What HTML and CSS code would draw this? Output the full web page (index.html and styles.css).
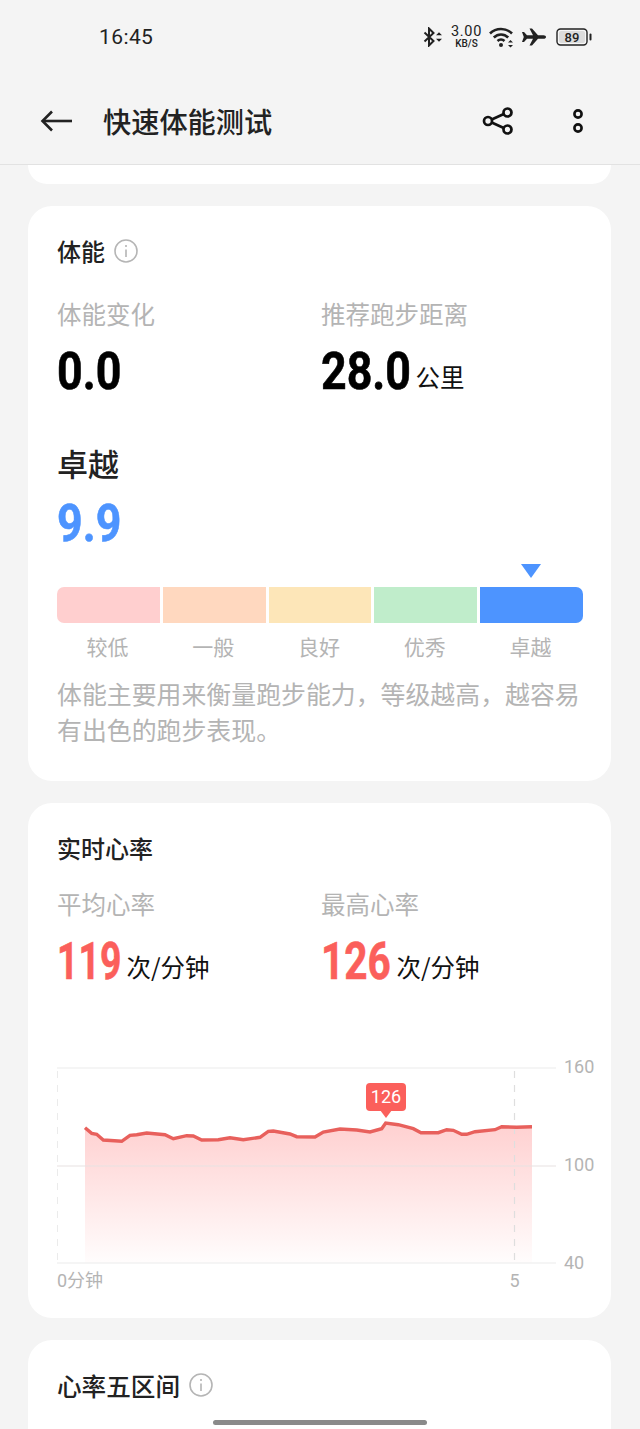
FILE: index.html
```html
<!DOCTYPE html>
<html lang="zh-CN">
<head>
  <meta charset="UTF-8" />
  <meta name="viewport" content="width=device-width, initial-scale=1.0"/>
  <title>快速体能测试</title>
  <link rel="stylesheet" href="styles.css">
</head>
<body>

  <!-- Status bar -->
  <div class="status-bar">
    <span class="time">16:45</span>
    <div class="status-icons">
      <svg class="icon-bt" viewBox="0 0 20 20" width="20" height="20" fill="none" stroke="#222" stroke-width="2">
        <path d="M1.5 5.5 L10.5 14 L6 18.5 V1.5 L10.5 6 L1.5 14.5"/>
        <path d="M13 8.3 L16 5.3 L19 8.3 Z M13 11.7 L16 14.7 L19 11.7 Z" fill="#222" stroke="none"/>
      </svg>
      <div class="speed">
        <span class="speed-num">3.00</span>
        <span class="speed-unit">KB/S</span>
      </div>
      <svg class="icon-wifi" viewBox="0 0 26 22" width="26" height="22" fill="none" stroke="#222" stroke-width="2.6">
        <path d="M1 7.5 C7 1.5 17 1.5 23 7.5"/>
        <path d="M4.8 11.5 C9 7.5 15 7.5 19.2 11.5"/>
        <path d="M8.5 15 C10.5 13.2 13.5 13.2 15.5 15"/>
        <circle cx="12" cy="19" r="2" fill="#222" stroke="none"/>
        <path d="M19 16.5 L21.5 14 L24 16.5 Z M19 19 L21.5 21.5 L24 19 Z" fill="#222" stroke="none"/>
      </svg>
      <svg class="icon-plane" viewBox="0 0 24 18" width="24" height="18" fill="#222">
        <path d="M0 4 H2 L5 7.2 H11 L7.5 0.5 H10 L16 7.2 H21.5 C23 7.2 24 8 24 9 C24 10 23 10.8 21.5 10.8 H16 L10 17.5 H7.5 L11 10.8 H5 L2 14 H0 L1.8 9 Z"/>
      </svg>
      <svg class="icon-battery" viewBox="0 0 37 18" width="37" height="18">
        <rect x="1" y="1" width="30" height="16" rx="3.5" fill="#fff" fill-opacity=".2" stroke="#222" stroke-width="1.4"/>
        <rect x="3" y="3" width="26" height="12" rx="2" fill="#dcdcdc"/>
        <rect x="33.5" y="5.5" width="2" height="7" rx="1" fill="#222"/>
        <text x="16" y="14" text-anchor="middle" class="battery-text">89</text>
      </svg>
    </div>
  </div>

  <!-- App bar -->
  <div class="app-bar">
    <svg class="back" viewBox="0 0 34 24" width="34" height="24" fill="none" stroke="#222" stroke-width="2.6">
      <path d="M32 12 H3"/>
      <path d="M12 2.5 L2.5 12 L12 21.5"/>
    </svg>
    <h1 class="page-title">快速体能测试</h1>
    <svg class="share" viewBox="0 0 32 30" width="32" height="30" fill="none" stroke="#111" stroke-width="2.7">
      <circle cx="6" cy="15" r="4"/>
      <circle cx="25.5" cy="6.5" r="4"/>
      <circle cx="25.5" cy="23.5" r="4"/>
      <path d="M9.7 13.4 L21.8 8.1 M9.7 16.6 L21.8 21.9"/>
    </svg>
    <svg class="more" viewBox="0 0 12 26" width="12" height="26" fill="none" stroke="#111" stroke-width="2.6">
      <circle cx="6" cy="6" r="3.6"/>
      <circle cx="6" cy="20" r="3.6"/>
    </svg>
  </div>

  <div class="content">
    <div class="card card-tail"></div>

    <!-- Fitness -->
    <div class="card">
      <div class="card-title">体能
        <svg class="info" viewBox="0 0 24 24" width="24" height="24" fill="none" stroke="#b5b5b5" stroke-width="1.6">
          <circle cx="12" cy="12" r="11"/>
          <path d="M12 10.5 V18 M12 6 V8"/>
        </svg>
      </div>
      <div class="stats">
        <div class="stat">
          <div class="stat-label">体能变化</div>
          <div class="stat-value"><span class="num">0.0</span></div>
        </div>
        <div class="stat">
          <div class="stat-label">推荐跑步距离</div>
          <div class="stat-value"><span class="num">28.0</span><span class="unit unit-km">公里</span></div>
        </div>
      </div>
      <div class="level-name">卓越</div>
      <div class="level-score"><span class="num num-blue">9.9</span></div>
      <div class="scale">
        <div class="marker"></div>
        <div class="seg seg-low"></div>
        <div class="seg seg-fair"></div>
        <div class="seg seg-good"></div>
        <div class="seg seg-great"></div>
        <div class="seg seg-top"></div>
        <div class="seg-label">较低</div>
        <div class="seg-label">一般</div>
        <div class="seg-label">良好</div>
        <div class="seg-label">优秀</div>
        <div class="seg-label">卓越</div>
      </div>
      <p class="desc">体能主要用来衡量跑步能力，等级越高，越容易有出色的跑步表现。</p>
    </div>

    <!-- Heart rate -->
    <div class="card">
      <div class="card-title">实时心率</div>
      <div class="stats stats-hr">
        <div class="stat">
          <div class="stat-label">平均心率</div>
          <div class="stat-value"><span class="num num-red num-ones">119</span><span class="unit unit-ones">次/分钟</span></div>
        </div>
        <div class="stat">
          <div class="stat-label">最高心率</div>
          <div class="stat-value"><span class="num num-red">126</span><span class="unit unit-bpm">次/分钟</span></div>
        </div>
      </div>
      <svg class="chart" viewBox="57 1050 540 245" width="540" height="245">
        <defs>
          <linearGradient id="hrFill" x1="0" y1="0" x2="0" y2="1">
            <stop offset="0" stop-color="#ffd0d0"/>
            <stop offset="1" stop-color="#ffd0d0" stop-opacity="0.05"/>
          </linearGradient>
        </defs>
        <path d="M85 1127.7 L91.7 1133.3 L96.7 1134.3 L103.3 1140 L121.7 1141.3 L130 1135.3 L136.7 1134.7 L146.7 1133 L165 1134.7 L173.3 1138.7 L186.7 1135.7 L193.3 1136 L201.7 1140 L218.3 1139.7 L230 1137.7 L243.3 1139.7 L260 1137.3 L268.3 1131.3 L273.3 1131 L290 1134 L296.7 1136.7 L315 1137 L323.3 1132 L340 1129 L356.7 1130 L370 1132 L381.7 1128.7 L385.7 1123 L398.3 1124.7 L413.3 1128.7 L421 1132.7 L438.3 1132.7 L446.7 1129.7 L453.3 1130.3 L461.7 1134.3 L466.7 1134.3 L475 1131.7 L495 1129.7 L501.7 1126.7 L516.7 1127.3 L532 1126.7 V1263 H85 Z" fill="url(#hrFill)"/>
        <g stroke="#ececec" stroke-width="1.2">
          <path d="M57 1068 H556"/>
          <path d="M57 1166 H556" stroke="#e8e2e2"/>
          <path d="M57 1263 H556"/>
        </g>
        <g stroke="#dedede" stroke-width="1.2" stroke-dasharray="7 7">
          <path d="M57 1071 V1263"/>
          <path d="M514.5 1071 V1263"/>
        </g>
        <path d="M85 1127.7 L91.7 1133.3 L96.7 1134.3 L103.3 1140 L121.7 1141.3 L130 1135.3 L136.7 1134.7 L146.7 1133 L165 1134.7 L173.3 1138.7 L186.7 1135.7 L193.3 1136 L201.7 1140 L218.3 1139.7 L230 1137.7 L243.3 1139.7 L260 1137.3 L268.3 1131.3 L273.3 1131 L290 1134 L296.7 1136.7 L315 1137 L323.3 1132 L340 1129 L356.7 1130 L370 1132 L381.7 1128.7 L385.7 1123 L398.3 1124.7 L413.3 1128.7 L421 1132.7 L438.3 1132.7 L446.7 1129.7 L453.3 1130.3 L461.7 1134.3 L466.7 1134.3 L475 1131.7 L495 1129.7 L501.7 1126.7 L516.7 1127.3 L532 1126.7" fill="none" stroke="#e8605c" stroke-width="3.4"/>
        <rect x="366" y="1083" width="40" height="28" rx="4" fill="#fb5f5b"/>
        <path d="M380 1110 H392 L386 1118 Z" fill="#fb5f5b"/>
        <text x="386" y="1103" text-anchor="middle" class="bubble-text">126</text>
        <text x="564" y="1073" class="axis">160</text>
        <text x="564" y="1171" class="axis">100</text>
        <text x="564" y="1269" class="axis">40</text>
        <text x="57" y="1287" class="axis">0分钟</text>
        <text x="514.5" y="1287" text-anchor="middle" class="axis">5</text>
      </svg>
    </div>

    <!-- Heart rate zones -->
    <div class="card card-last">
      <div class="card-title card-title-wide">心率五区间
        <svg class="info" viewBox="0 0 24 24" width="24" height="24" fill="none" stroke="#b5b5b5" stroke-width="1.6">
          <circle cx="12" cy="12" r="11"/>
          <path d="M12 10.5 V18 M12 6 V8"/>
        </svg>
      </div>
    </div>
  </div>

  <div class="home-bar"></div>

</body>
</html>
```

FILE: styles.css
```css
body {
  margin: 0;
  width: 640px;
  height: 1429px;
  overflow: hidden;
  position: relative;
  background: #f4f4f4;
  font-family: "Noto Sans CJK SC", "Noto Sans", sans-serif;
  color: #222;
}

.status-bar {
  height: 73px;
  display: flex;
  align-items: center;
  justify-content: space-between;
  padding: 0 47px 0 99px;
}

.time {
  font-family: Roboto, sans-serif;
  font-size: 21px;
  letter-spacing: 0.4px;
  color: #222;
}

.status-icons {
  display: flex;
  align-items: center;
}

.speed {
  display: flex;
  flex-direction: column;
  align-items: center;
  margin: 0 7px 0 8px;
  font-family: Roboto, sans-serif;
  color: #222;
}

.speed-num {
  font-size: 14.5px;
  line-height: 13px;
  letter-spacing: 0.7px;
}

.speed-unit {
  font-size: 10px;
  line-height: 11px;
  font-weight: 500;
}

.icon-plane {
  margin: 0 10px 0 7px;
}

.battery-text {
  font-family: Roboto, sans-serif;
  font-size: 13px;
  font-weight: 500;
  fill: #222;
}

.app-bar {
  height: 92px;
  box-sizing: border-box;
  display: flex;
  align-items: center;
  padding: 5px 56px 0 40px;
  border-bottom: 1px solid #e2e2e2;
}

.page-title {
  flex: 1;
  margin: 0 0 0 29px;
  font-size: 28.2px;
  font-weight: 500;
  line-height: 40px;
  color: #222;
}

.more {
  margin-left: 58px;
}

.content {
  display: flex;
  flex-direction: column;
  gap: 22px;
  padding: 0 29px 0 28px;
}

.card {
  background: #fff;
  border-radius: 24px;
  padding: 29px 28px 23px 29px;
}

.card-tail {
  height: 19px;
  padding: 0;
  border-radius: 0 0 24px 24px;
}

.card-last {
  padding-bottom: 80px;
}

.card-title {
  display: flex;
  align-items: center;
  gap: 9px;
  font-size: 24px;
  font-weight: 500;
  line-height: 32px;
  color: #222;
}

.card-title-wide {
  font-size: 24.6px;
}

.stats {
  display: grid;
  grid-template-columns: 264px 1fr;
  margin-top: 30px;
}

.stats-hr {
  margin-top: 23px;
}

.stat-label {
  font-size: 24.5px;
  line-height: 34px;
  color: #b4b4b4;
}

.stat-value {
  display: flex;
  align-items: flex-start;
  height: 56px;
  margin-top: 13px;
  line-height: 56px;
}

.num {
  display: inline-block;
  font-family: Roboto, sans-serif;
  font-size: 52px;
  font-weight: 700;
  -webkit-text-stroke: 0.6px currentColor;
  color: #000;
  transform: scaleX(0.86);
  transform-origin: left center;
}

.num-blue {
  color: #4d94ff;
}

.num-red {
  color: #fb5f5b;
  transform: scaleX(0.78);
}

.num-ones {
  transform: scaleX(0.72);
}

.unit {
  margin-top: 16px;
  font-size: 24.5px;
  line-height: 34px;
  color: #111;
}

.unit-km {
  margin-left: -10px;
}

.unit-ones {
  margin-left: -20px;
}

.unit-bpm {
  margin-left: -14px;
}

.level-name {
  margin-top: 43px;
  font-size: 31px;
  font-weight: 500;
  line-height: 40px;
}

.level-score {
  height: 56px;
  margin-top: 13px;
  line-height: 56px;
}

.scale {
  display: grid;
  grid-template-columns: repeat(5, 1fr);
  column-gap: 3px;
  margin-top: 12px;
}

.marker {
  grid-column: 5;
  justify-self: center;
  width: 0;
  height: 0;
  margin: 0 2px 9px 0;
  border-left: 10.5px solid transparent;
  border-right: 10.5px solid transparent;
  border-top: 14px solid #4d94ff;
}

.seg {
  height: 36px;
}

.seg-low {
  background: #ffcfcf;
  border-radius: 7px 0 0 7px;
}

.seg-fair {
  background: #ffd8bf;
}

.seg-good {
  background: #fde6b8;
}

.seg-great {
  background: #c0edcb;
}

.seg-top {
  background: #4d94ff;
  border-radius: 0 7px 7px 0;
}

.seg-label {
  margin-top: 8px;
  padding-right: 2px;
  font-size: 21px;
  line-height: 30px;
  text-align: center;
  color: #b4b4b4;
}

.desc {
  margin: 14px 0 11px;
  font-size: 24.9px;
  line-height: 36px;
  color: #b4b4b4;
}

.chart {
  display: block;
  margin-top: 60px;
}

.axis {
  font-family: Roboto, "Noto Sans CJK SC", sans-serif;
  font-size: 18px;
  fill: #b4b4b4;
}

.bubble-text {
  font-family: Roboto, sans-serif;
  font-size: 18px;
  fill: #fff;
}

.home-bar {
  position: absolute;
  left: 213px;
  bottom: 4px;
  width: 214px;
  height: 5px;
  border-radius: 3px;
  background: #8a8a8a;
}
```
